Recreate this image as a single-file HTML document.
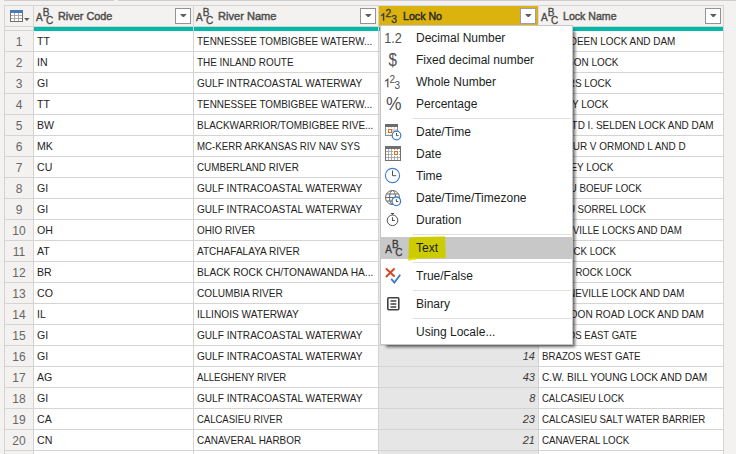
<!DOCTYPE html><html><head><meta charset="utf-8"><style>
*{margin:0;padding:0;box-sizing:border-box}
html,body{width:736px;height:454px;overflow:hidden;background:#f3f2f1;font-family:"Liberation Sans",sans-serif}
.a{position:absolute}
.t{position:absolute;white-space:nowrap;font-size:11.5px;line-height:20px;height:20px;color:#252423}
.s{display:inline-block;transform:scaleX(0.865);transform-origin:0 50%}
.sr{display:inline-block;transform:scaleX(0.865);transform-origin:100% 50%}
.hd{position:absolute;top:6px;height:20px;line-height:20px;font-size:11.5px;font-weight:normal;color:#4f4d4b;-webkit-text-stroke:0.45px #4f4d4b;white-space:nowrap}
.dd{position:absolute;top:8px;width:16px;height:16px;border:1px solid #959391;background:#fff}
.mi{position:absolute;left:416px;font-size:12px;line-height:22px;height:22px;color:#201f1e;white-space:nowrap}
.sep{position:absolute;left:413px;width:158px;height:1px;background:#e1dfdd}
svg text{font-family:"Liberation Sans",sans-serif}
</style></head><body><div class="a" style="left:4px;top:0;width:732px;height:1px;background:#cfcdcb"></div>
<div class="a" style="left:114px;top:0;width:4px;height:1px;background:#f3f2f1"></div>
<div class="a" style="left:4px;top:5px;width:720px;height:449px;background:#fff;border:1px solid #d6d4d2;border-bottom:none"></div>
<div class="a" style="left:5px;top:6px;width:718px;height:20px;background:#f3f2f1"></div>
<div class="a" style="left:5px;top:26px;width:718px;height:1px;background:#d6d4d2"></div>
<div class="a" style="left:5px;top:27px;width:28px;height:427px;background:#f3f2f1"></div>
<div class="a" style="left:5px;top:27px;width:28px;height:3px;background:#f3f2f1"></div>
<div class="a" style="left:379px;top:31px;width:159px;height:423px;background:#e6e6e6"></div>
<div class="a" style="left:34px;top:27px;width:159px;height:4px;background:#01b8aa"></div>
<div class="a" style="left:194px;top:27px;width:184px;height:4px;background:#01b8aa"></div>
<div class="a" style="left:379px;top:27px;width:159px;height:4px;background:#01b8aa"></div>
<div class="a" style="left:539px;top:27px;width:184px;height:4px;background:#01b8aa"></div>
<div class="a" style="left:5px;top:30px;width:28px;height:1px;background:#d6d4d2"></div>
<div class="a" style="left:5px;top:51px;width:718px;height:1px;background:#d6d4d2"></div>
<div class="a" style="left:5px;top:72px;width:718px;height:1px;background:#d6d4d2"></div>
<div class="a" style="left:5px;top:93px;width:718px;height:1px;background:#d6d4d2"></div>
<div class="a" style="left:5px;top:114px;width:718px;height:1px;background:#d6d4d2"></div>
<div class="a" style="left:5px;top:135px;width:718px;height:1px;background:#d6d4d2"></div>
<div class="a" style="left:5px;top:156px;width:718px;height:1px;background:#d6d4d2"></div>
<div class="a" style="left:5px;top:177px;width:718px;height:1px;background:#d6d4d2"></div>
<div class="a" style="left:5px;top:198px;width:718px;height:1px;background:#d6d4d2"></div>
<div class="a" style="left:5px;top:219px;width:718px;height:1px;background:#d6d4d2"></div>
<div class="a" style="left:5px;top:240px;width:718px;height:1px;background:#d6d4d2"></div>
<div class="a" style="left:5px;top:261px;width:718px;height:1px;background:#d6d4d2"></div>
<div class="a" style="left:5px;top:282px;width:718px;height:1px;background:#d6d4d2"></div>
<div class="a" style="left:5px;top:303px;width:718px;height:1px;background:#d6d4d2"></div>
<div class="a" style="left:5px;top:324px;width:718px;height:1px;background:#d6d4d2"></div>
<div class="a" style="left:5px;top:345px;width:718px;height:1px;background:#d6d4d2"></div>
<div class="a" style="left:5px;top:366px;width:718px;height:1px;background:#d6d4d2"></div>
<div class="a" style="left:5px;top:387px;width:718px;height:1px;background:#d6d4d2"></div>
<div class="a" style="left:5px;top:408px;width:718px;height:1px;background:#d6d4d2"></div>
<div class="a" style="left:5px;top:429px;width:718px;height:1px;background:#d6d4d2"></div>
<div class="a" style="left:5px;top:450px;width:718px;height:1px;background:#d6d4d2"></div>
<div class="a" style="left:33px;top:6px;width:1px;height:448px;background:#d6d4d2"></div>
<div class="a" style="left:193px;top:6px;width:1px;height:448px;background:#d6d4d2"></div>
<div class="a" style="left:378px;top:6px;width:1px;height:448px;background:#d6d4d2"></div>
<div class="a" style="left:538px;top:6px;width:1px;height:448px;background:#d6d4d2"></div>
<div class="a" style="left:379px;top:6px;width:159px;height:19px;background:#dbb20e"></div>
<div class="a" style="left:379px;top:25px;width:1px;height:1px;background:#dbb20e"></div>
<div class="a" style="left:379px;top:5px;width:160px;height:1px;background:#d9d8e8"></div>
<div class="a" style="left:538px;top:5px;width:1px;height:22px;background:#dcdcec"></div>
<div class="dd" style="left:175px;border-color:#959391"><svg width="7" height="4" viewBox="0 0 7 4" style="position:absolute;left:4px;top:5px"><path d="M0 0H6.7L4 3H2.7Z" fill="#605e5c"/></svg></div>
<div class="dd" style="left:360px;border-color:#959391"><svg width="7" height="4" viewBox="0 0 7 4" style="position:absolute;left:4px;top:5px"><path d="M0 0H6.7L4 3H2.7Z" fill="#605e5c"/></svg></div>
<div class="dd" style="left:520px;border-color:#9d9cb5"><svg width="7" height="4" viewBox="0 0 7 4" style="position:absolute;left:4px;top:5px"><path d="M0 0H6.7L4 3H2.7Z" fill="#605e5c"/></svg></div>
<div class="dd" style="left:705px;border-color:#959391"><svg width="7" height="4" viewBox="0 0 7 4" style="position:absolute;left:4px;top:5px"><path d="M0 0H6.7L4 3H2.7Z" fill="#605e5c"/></svg></div>
<svg class="a" style="left:10px;top:10px" width="20" height="12" viewBox="0 0 20 12" shape-rendering="crispEdges">
<rect x="0" y="0" width="13" height="12" fill="#6e6e6e"/>
<rect x="1" y="3" width="11" height="8" fill="#a9a9a9"/>
<rect x="1" y="3" width="3" height="2" fill="#fff"/><rect x="5" y="3" width="3" height="2" fill="#fff"/><rect x="9" y="3" width="3" height="2" fill="#fff"/>
<rect x="1" y="6" width="3" height="2" fill="#fff"/><rect x="5" y="6" width="3" height="2" fill="#fff"/><rect x="9" y="6" width="3" height="2" fill="#fff"/>
<rect x="1" y="9" width="3" height="2" fill="#fff"/><rect x="5" y="9" width="3" height="2" fill="#fff"/><rect x="9" y="9" width="3" height="2" fill="#fff"/>
<rect x="0" y="0" width="13" height="3" fill="#4a78bd"/>
</svg>
<svg class="a" style="left:23px;top:17px" width="8" height="5" viewBox="0 0 8 5"><path d="M1 1H6.6L3.8 3.9Z" fill="#605e5c"/></svg>
<svg class="a" style="left:0px;top:0px;overflow:visible" width="1" height="1"><text x="35.9" y="20.6" font-size="10" fill="#484644" font-weight="normal" stroke="#484644" stroke-width="0.3">A</text><text x="42.7" y="15.700000000000001" font-size="10" fill="#484644" font-weight="normal" stroke="#484644" stroke-width="0.3">B</text><text x="45.9" y="23.700000000000003" font-size="10" fill="#484644" font-weight="normal" stroke="#484644" stroke-width="0.3">C</text></svg>
<div class="hd" style="left:58px"><span class="s" style="transform:scaleX(0.945)">River Code</span></div>
<svg class="a" style="left:0px;top:0px;overflow:visible" width="1" height="1"><text x="195.9" y="20.6" font-size="10" fill="#484644" font-weight="normal" stroke="#484644" stroke-width="0.3">A</text><text x="202.7" y="15.700000000000001" font-size="10" fill="#484644" font-weight="normal" stroke="#484644" stroke-width="0.3">B</text><text x="205.9" y="23.700000000000003" font-size="10" fill="#484644" font-weight="normal" stroke="#484644" stroke-width="0.3">C</text></svg>
<div class="hd" style="left:218px"><span class="s" style="transform:scaleX(0.963)">River Name</span></div>
<svg class="a" style="left:0px;top:0px;overflow:visible" width="1" height="1"><text x="385.6" y="16.6" font-size="10.3" fill="#3b3a39" font-weight="normal" stroke="#3b3a39" stroke-width="0.35">2</text><text x="391.2" y="23.2" font-size="10.3" fill="#3b3a39" font-weight="normal" stroke="#3b3a39" stroke-width="0.35">3</text></svg>
<svg class="a" style="left:0;top:0;overflow:visible" width="1" height="1"><path d="M381.2 15.7L383.6 13.8V20.7" stroke="#3b3a39" stroke-width="1.35" fill="none"/></svg>
<div class="hd" style="left:403px;color:#2b2a29;-webkit-text-stroke:0.45px #2b2a29"><span class="s" style="transform:scaleX(0.924)">Lock No</span></div>
<svg class="a" style="left:0px;top:0px;overflow:visible" width="1" height="1"><text x="540.9" y="20.6" font-size="10" fill="#484644" font-weight="normal" stroke="#484644" stroke-width="0.3">A</text><text x="547.7" y="15.700000000000001" font-size="10" fill="#484644" font-weight="normal" stroke="#484644" stroke-width="0.3">B</text><text x="550.9" y="23.700000000000003" font-size="10" fill="#484644" font-weight="normal" stroke="#484644" stroke-width="0.3">C</text></svg>
<div class="hd" style="left:563px"><span class="s" style="transform:scaleX(0.92)">Lock Name</span></div>
<div class="t" style="left:5px;top:32px;width:28px;text-align:center;color:#686664;font-size:12px">1</div>
<div class="t" style="left:37px;top:31px"><span class="s" style="transform:scaleX(0.92)">TT</span></div>
<div class="t" style="left:197px;top:31px"><span class="s" style="transform:scaleX(0.8601)">TENNESSEE TOMBIGBEE WATERW...</span></div>
<div class="t" style="right:61.0px;top:31px;text-align:right"><span class="sr" style="transform:scaleX(0.865)">ABERDEEN LOCK AND DAM</span></div>
<div class="t" style="left:5px;top:53px;width:28px;text-align:center;color:#686664;font-size:12px">2</div>
<div class="t" style="left:37px;top:52px"><span class="s" style="transform:scaleX(0.92)">IN</span></div>
<div class="t" style="left:197px;top:52px"><span class="s" style="transform:scaleX(0.8632)">THE INLAND ROUTE</span></div>
<div class="t" style="right:117.70000000000005px;top:52px;text-align:right"><span class="sr" style="transform:scaleX(0.865)">ALANSON LOCK</span></div>
<div class="t" style="left:5px;top:74px;width:28px;text-align:center;color:#686664;font-size:12px">3</div>
<div class="t" style="left:37px;top:73px"><span class="s" style="transform:scaleX(0.92)">GI</span></div>
<div class="t" style="left:197px;top:73px"><span class="s" style="transform:scaleX(0.874)">GULF INTRACOASTAL WATERWAY</span></div>
<div class="t" style="right:125.10000000000002px;top:73px;text-align:right"><span class="sr" style="transform:scaleX(0.865)">ALGIERS LOCK</span></div>
<div class="t" style="left:5px;top:95px;width:28px;text-align:center;color:#686664;font-size:12px">4</div>
<div class="t" style="left:37px;top:94px"><span class="s" style="transform:scaleX(0.92)">TT</span></div>
<div class="t" style="left:197px;top:94px"><span class="s" style="transform:scaleX(0.8601)">TENNESSEE TOMBIGBEE WATERW...</span></div>
<div class="t" style="right:128.10000000000002px;top:94px;text-align:right"><span class="sr" style="transform:scaleX(0.865)">AMORY LOCK</span></div>
<div class="t" style="left:5px;top:116px;width:28px;text-align:center;color:#686664;font-size:12px">5</div>
<div class="t" style="left:37px;top:115px"><span class="s" style="transform:scaleX(0.92)">BW</span></div>
<div class="t" style="left:197px;top:115px"><span class="s" style="transform:scaleX(0.865)">BLACKWARRIOR/TOMBIGBEE RIVE...</span></div>
<div class="t" style="right:22.200000000000045px;top:115px;text-align:right"><span class="sr" style="transform:scaleX(0.865)">ARMISTD I. SELDEN LOCK AND DAM</span></div>
<div class="t" style="left:5px;top:137px;width:28px;text-align:center;color:#686664;font-size:12px">6</div>
<div class="t" style="left:37px;top:136px"><span class="s" style="transform:scaleX(0.92)">MK</span></div>
<div class="t" style="left:197px;top:136px"><span class="s" style="transform:scaleX(0.8422)">MC-KERR ARKANSAS RIV NAV SYS</span></div>
<div class="t" style="right:50.60000000000002px;top:136px;text-align:right"><span class="sr" style="transform:scaleX(0.865)">ARTHUR V ORMOND L AND D</span></div>
<div class="t" style="left:5px;top:158px;width:28px;text-align:center;color:#686664;font-size:12px">7</div>
<div class="t" style="left:37px;top:157px"><span class="s" style="transform:scaleX(0.92)">CU</span></div>
<div class="t" style="left:197px;top:157px"><span class="s" style="transform:scaleX(0.8565)">CUMBERLAND RIVER</span></div>
<div class="t" style="right:122.70000000000005px;top:157px;text-align:right"><span class="sr" style="transform:scaleX(0.865)">BARKLEY LOCK</span></div>
<div class="t" style="left:5px;top:179px;width:28px;text-align:center;color:#686664;font-size:12px">8</div>
<div class="t" style="left:37px;top:178px"><span class="s" style="transform:scaleX(0.92)">GI</span></div>
<div class="t" style="left:197px;top:178px"><span class="s" style="transform:scaleX(0.8746)">GULF INTRACOASTAL WATERWAY</span></div>
<div class="t" style="right:94.5px;top:178px;text-align:right"><span class="sr" style="transform:scaleX(0.84)">BAYOU BOEUF LOCK</span></div>
<div class="t" style="left:5px;top:200px;width:28px;text-align:center;color:#686664;font-size:12px">9</div>
<div class="t" style="left:37px;top:199px"><span class="s" style="transform:scaleX(0.92)">GI</span></div>
<div class="t" style="left:197px;top:199px"><span class="s" style="transform:scaleX(0.8746)">GULF INTRACOASTAL WATERWAY</span></div>
<div class="t" style="right:90.39999999999998px;top:199px;text-align:right"><span class="sr" style="transform:scaleX(0.84)">BAYOU SORREL LOCK</span></div>
<div class="t" style="left:5px;top:221px;width:28px;text-align:center;color:#686664;font-size:12px">10</div>
<div class="t" style="left:37px;top:220px"><span class="s" style="transform:scaleX(0.92)">OH</span></div>
<div class="t" style="left:197px;top:220px"><span class="s" style="transform:scaleX(0.8575)">OHIO RIVER</span></div>
<div class="t" style="right:53.89999999999998px;top:220px;text-align:right"><span class="sr" style="transform:scaleX(0.845)">BELLEVILLE LOCKS AND DAM</span></div>
<div class="t" style="left:5px;top:242px;width:28px;text-align:center;color:#686664;font-size:12px">11</div>
<div class="t" style="left:37px;top:241px"><span class="s" style="transform:scaleX(0.92)">AT</span></div>
<div class="t" style="left:197px;top:241px"><span class="s" style="transform:scaleX(0.8736)">ATCHAFALAYA RIVER</span></div>
<div class="t" style="right:120.5px;top:241px;text-align:right"><span class="sr" style="transform:scaleX(0.84)">BERWICK LOCK</span></div>
<div class="t" style="left:5px;top:263px;width:28px;text-align:center;color:#686664;font-size:12px">12</div>
<div class="t" style="left:37px;top:262px"><span class="s" style="transform:scaleX(0.92)">BR</span></div>
<div class="t" style="left:197px;top:262px"><span class="s" style="transform:scaleX(0.8862)">BLACK ROCK CH/TONAWANDA HA...</span></div>
<div class="t" style="right:104.70000000000005px;top:262px;text-align:right"><span class="sr" style="transform:scaleX(0.83)">BLACK ROCK LOCK</span></div>
<div class="t" style="left:5px;top:284px;width:28px;text-align:center;color:#686664;font-size:12px">13</div>
<div class="t" style="left:37px;top:283px"><span class="s" style="transform:scaleX(0.92)">CO</span></div>
<div class="t" style="left:197px;top:283px"><span class="s" style="transform:scaleX(0.8784)">COLUMBIA RIVER</span></div>
<div class="t" style="right:51.799999999999955px;top:283px;text-align:right"><span class="sr" style="transform:scaleX(0.845)">BONNEVILLE LOCK AND DAM</span></div>
<div class="t" style="left:5px;top:305px;width:28px;text-align:center;color:#686664;font-size:12px">14</div>
<div class="t" style="left:37px;top:304px"><span class="s" style="transform:scaleX(0.92)">IL</span></div>
<div class="t" style="left:197px;top:304px"><span class="s" style="transform:scaleX(0.8823)">ILLINOIS WATERWAY</span></div>
<div class="t" style="right:31.5px;top:304px;text-align:right"><span class="sr" style="transform:scaleX(0.88)">BRANDON ROAD LOCK AND DAM</span></div>
<div class="t" style="left:5px;top:326px;width:28px;text-align:center;color:#686664;font-size:12px">15</div>
<div class="t" style="left:37px;top:325px"><span class="s" style="transform:scaleX(0.92)">GI</span></div>
<div class="t" style="left:197px;top:325px"><span class="s" style="transform:scaleX(0.8756)">GULF INTRACOASTAL WATERWAY</span></div>
<div class="t" style="right:98.89999999999998px;top:325px;text-align:right"><span class="sr" style="transform:scaleX(0.83)">BRAZOS EAST GATE</span></div>
<div class="t" style="left:5px;top:347px;width:28px;text-align:center;color:#686664;font-size:12px">16</div>
<div class="t" style="left:37px;top:346px"><span class="s" style="transform:scaleX(0.92)">GI</span></div>
<div class="t" style="left:197px;top:346px"><span class="s" style="transform:scaleX(0.8756)">GULF INTRACOASTAL WATERWAY</span></div>
<div class="t" style="left:379px;top:346px;width:156px;text-align:right;font-style:italic;color:#3b3a39"><span class="sr" style="transform:scaleX(0.95)">14</span></div>
<div class="t" style="left:542px;top:346px"><span class="s" style="transform:scaleX(0.841)">BRAZOS WEST GATE</span></div>
<div class="t" style="left:5px;top:368px;width:28px;text-align:center;color:#686664;font-size:12px">17</div>
<div class="t" style="left:37px;top:367px"><span class="s" style="transform:scaleX(0.92)">AG</span></div>
<div class="t" style="left:197px;top:367px"><span class="s" style="transform:scaleX(0.8321)">ALLEGHENY RIVER</span></div>
<div class="t" style="left:379px;top:367px;width:156px;text-align:right;font-style:italic;color:#3b3a39"><span class="sr" style="transform:scaleX(0.95)">43</span></div>
<div class="t" style="left:542px;top:367px"><span class="s" style="transform:scaleX(0.886)">C.W. BILL YOUNG LOCK AND DAM</span></div>
<div class="t" style="left:5px;top:389px;width:28px;text-align:center;color:#686664;font-size:12px">18</div>
<div class="t" style="left:37px;top:388px"><span class="s" style="transform:scaleX(0.92)">GI</span></div>
<div class="t" style="left:197px;top:388px"><span class="s" style="transform:scaleX(0.8756)">GULF INTRACOASTAL WATERWAY</span></div>
<div class="t" style="left:379px;top:388px;width:156px;text-align:right;font-style:italic;color:#3b3a39"><span class="sr" style="transform:scaleX(0.95)">8</span></div>
<div class="t" style="left:542px;top:388px"><span class="s" style="transform:scaleX(0.8228)">CALCASIEU LOCK</span></div>
<div class="t" style="left:5px;top:410px;width:28px;text-align:center;color:#686664;font-size:12px">19</div>
<div class="t" style="left:37px;top:409px"><span class="s" style="transform:scaleX(0.92)">CA</span></div>
<div class="t" style="left:197px;top:409px"><span class="s" style="transform:scaleX(0.8261)">CALCASIEU RIVER</span></div>
<div class="t" style="left:379px;top:409px;width:156px;text-align:right;font-style:italic;color:#3b3a39"><span class="sr" style="transform:scaleX(0.95)">23</span></div>
<div class="t" style="left:542px;top:409px"><span class="s" style="transform:scaleX(0.8422)">CALCASIEU SALT WATER BARRIER</span></div>
<div class="t" style="left:5px;top:431px;width:28px;text-align:center;color:#686664;font-size:12px">20</div>
<div class="t" style="left:37px;top:430px"><span class="s" style="transform:scaleX(0.92)">CN</span></div>
<div class="t" style="left:197px;top:430px"><span class="s" style="transform:scaleX(0.8617)">CANAVERAL HARBOR</span></div>
<div class="t" style="left:379px;top:430px;width:156px;text-align:right;font-style:italic;color:#3b3a39"><span class="sr" style="transform:scaleX(0.95)">21</span></div>
<div class="t" style="left:542px;top:430px"><span class="s" style="transform:scaleX(0.8475)">CANAVERAL LOCK</span></div>
<div class="a" style="left:723px;top:5px;width:1px;height:449px;background:#d6d4d2"></div>
<div class="a" style="left:724px;top:1px;width:12px;height:453px;background:#f3f2f1"></div>
<div class="a" style="left:380px;top:25px;width:193px;height:320px;background:#fff;border:1px solid #c6c6c6;box-shadow:4px 4px 3px -2px rgba(0,0,0,0.6)"></div>
<div class="a" style="left:381px;top:237px;width:191px;height:22px;background:#c8c8c8"></div>
<svg class="a" style="left:406px;top:234px" width="44" height="30" viewBox="0 0 44 30"><path d="M3 5 Q4 3 10 3 L39 2.5 L39.8 24 L12 24.5 Q8 26 2.5 26.5 Z" fill="#cccc00"/><path d="M2.5 24.5 L12 24.5 Q8 26 2.5 26.5Z" fill="#e8e800"/></svg>
<div class="sep" style="top:118px"></div>
<div class="sep" style="top:234px"></div>
<div class="sep" style="top:262px"></div>
<div class="sep" style="top:290px"></div>
<div class="sep" style="top:318px"></div>
<div class="mi" style="top:27px">Decimal Number</div>
<div class="mi" style="top:49px">Fixed decimal number</div>
<div class="mi" style="top:71px">Whole Number</div>
<div class="mi" style="top:93px">Percentage</div>
<div class="mi" style="top:121px">Date/Time</div>
<div class="mi" style="top:143px">Date</div>
<div class="mi" style="top:165px">Time</div>
<div class="mi" style="top:187px">Date/Time/Timezone</div>
<div class="mi" style="top:209px">Duration</div>
<div class="mi" style="top:237px">Text</div>
<div class="mi" style="top:265px">True/False</div>
<div class="mi" style="top:293px">Binary</div>
<div class="mi" style="top:321px">Using Locale...</div>
<svg class="a" style="left:0;top:0;overflow:visible" width="1" height="1"><text x="384.3" y="42.8" font-size="14" fill="#505050" textLength="17.6" lengthAdjust="spacingAndGlyphs">1.2</text></svg>
<svg class="a" style="left:0;top:0;overflow:visible" width="1" height="1"><text x="388.6" y="66" font-size="17.5" fill="#505050" textLength="8.4" lengthAdjust="spacingAndGlyphs">$</text></svg>
<svg class="a" style="left:0px;top:0px;overflow:visible" width="1" height="1"><text x="389.6" y="82.6" font-size="10" fill="#505050" font-weight="normal" stroke="#505050" stroke-width="0.0">2</text><text x="394.6" y="89" font-size="10" fill="#505050" font-weight="normal" stroke="#505050" stroke-width="0.0">3</text></svg>
<svg class="a" style="left:0;top:0;overflow:visible" width="1" height="1"><path d="M385.2 81.2L387.8 79.3V87.2" stroke="#505050" stroke-width="1.2" fill="none"/></svg>
<svg class="a" style="left:0px;top:0px;overflow:visible" width="1" height="1"><text x="386" y="109.6" font-size="17.5" fill="#505050" font-weight="normal" stroke="#505050" stroke-width="0.0">%</text></svg>

<svg class="a" style="left:384px;top:123px" width="18" height="18" viewBox="0 0 18 18" shape-rendering="crispEdges">
 <rect x="1" y="1" width="13" height="12" fill="#8c8c8c"/>
 <rect x="2" y="4" width="11" height="8" fill="#d4d4d4"/>
 <rect x="2" y="4" width="2" height="2" fill="#fff"/><rect x="5" y="4" width="2" height="2" fill="#fff"/><rect x="8" y="4" width="2" height="2" fill="#fff"/><rect x="11" y="4" width="2" height="2" fill="#fff"/>
 <rect x="2" y="7" width="2" height="2" fill="#fff"/><rect x="2" y="10" width="2" height="2" fill="#fff"/><rect x="5" y="10" width="2" height="2" fill="#fff"/>
 <rect x="1" y="1" width="13" height="3" fill="#6b6b6b"/>
 <rect x="3" y="5" width="5" height="6" fill="#fff"/>
 <rect x="4" y="6" width="4" height="4" fill="#e07020"/>
 <rect x="5" y="7" width="2" height="2" fill="#fff"/>
</svg>
<svg class="a" style="left:384px;top:123px" width="18" height="18" viewBox="0 0 18 18">
 <circle cx="12.5" cy="12.5" r="4.3" fill="#fff" stroke="#3f7fc8" stroke-width="1.2"/>
 <path d="M12.5 10V12.6H14.6" stroke="#505050" stroke-width="1" fill="none"/>
</svg>
<svg class="a" style="left:384px;top:145px" width="18" height="18" viewBox="0 0 18 18" shape-rendering="crispEdges">
 <rect x="1" y="1" width="16" height="15" fill="#707070"/>
 <rect x="2" y="4" width="14" height="11" fill="#ababab"/>
 <g fill="#fff">
 <rect x="2" y="4" width="2" height="2"/><rect x="5" y="4" width="2" height="2"/><rect x="8" y="4" width="2" height="2"/><rect x="11" y="4" width="2" height="2"/><rect x="14" y="4" width="2" height="2"/>
 <rect x="2" y="7" width="2" height="2"/><rect x="5" y="7" width="2" height="2"/><rect x="8" y="7" width="2" height="2"/><rect x="11" y="7" width="2" height="2"/><rect x="14" y="7" width="2" height="2"/>
 <rect x="2" y="10" width="2" height="2"/><rect x="5" y="10" width="2" height="2"/><rect x="8" y="10" width="2" height="2"/><rect x="11" y="10" width="2" height="2"/><rect x="14" y="10" width="2" height="2"/>
 <rect x="2" y="13" width="2" height="2"/><rect x="5" y="13" width="2" height="2"/><rect x="8" y="13" width="2" height="2"/><rect x="11" y="13" width="2" height="2"/><rect x="14" y="13" width="2" height="2"/>
 <rect x="9" y="5" width="6" height="6"/>
 </g>
 <rect x="10" y="6" width="4" height="4" fill="#e07020"/>
 <rect x="11" y="7" width="2" height="2" fill="#fff"/>
</svg>
<svg class="a" style="left:384px;top:167px" width="18" height="18" viewBox="0 0 18 18">
 <circle cx="8.5" cy="8.5" r="7.1" fill="#fff" stroke="#3f7fc8" stroke-width="1.1"/>
 <path d="M8.5 3.5V8.7H12.2" stroke="#505050" stroke-width="1" fill="none"/>
</svg>
<svg class="a" style="left:384px;top:189px" width="18" height="18" viewBox="0 0 18 18">
 <circle cx="8.5" cy="8.5" r="7" fill="none" stroke="#686868" stroke-width="1"/>
 <ellipse cx="8.5" cy="8.5" rx="3" ry="7" fill="none" stroke="#686868" stroke-width="1"/>
 <path d="M1.5 8.5H15.5M2.5 5H14.5M2.5 12H14.5" stroke="#686868" stroke-width="1"/>
 <circle cx="12.3" cy="12.3" r="4.3" fill="#fff" stroke="#3f7fc8" stroke-width="1.3"/>
 <path d="M12.3 10.2V12.6H14.3" stroke="#404040" stroke-width="1" fill="none"/>
</svg>
<svg class="a" style="left:384px;top:211px" width="18" height="18" viewBox="0 0 18 18">
 <circle cx="8.5" cy="9.3" r="5.3" fill="none" stroke="#505050" stroke-width="1"/>
 <path d="M7 2.5H10M8.5 2.5V4" stroke="#505050" stroke-width="1"/>
 <path d="M8.5 6.3V9.5H10.8" stroke="#505050" stroke-width="1.1" fill="none"/>
</svg>
<svg class="a" style="left:384px;top:264px" width="18" height="22" viewBox="0 0 18 22">
 <path d="M2.5 5L10 12M10 5L2.5 12.5" stroke="#d9472b" stroke-width="2" stroke-linecap="round"/>
 <path d="M7.2 14.8L10.4 18.6L16.2 10.8" stroke="#3b78c3" stroke-width="1.8" fill="none"/>
</svg>
<svg class="a" style="left:384px;top:295px" width="18" height="18" viewBox="0 0 18 18">
 <rect x="3.8" y="2.8" width="11" height="12" rx="1" fill="none" stroke="#404040" stroke-width="1.6"/>
 <path d="M6.5 6H12.3M6.5 9H12.3M6.5 12H12.3" stroke="#404040" stroke-width="1.4"/>
</svg>

<svg class="a" style="left:0px;top:0px;overflow:visible" width="1" height="1"><text x="385.2" y="252.9" font-size="10" fill="#3b3a39" font-weight="normal" stroke="#3b3a39" stroke-width="0.3">A</text><text x="392.0" y="247.9" font-size="10" fill="#3b3a39" font-weight="normal" stroke="#3b3a39" stroke-width="0.3">B</text><text x="395.2" y="256.1" font-size="10" fill="#3b3a39" font-weight="normal" stroke="#3b3a39" stroke-width="0.3">C</text></svg></body></html>
